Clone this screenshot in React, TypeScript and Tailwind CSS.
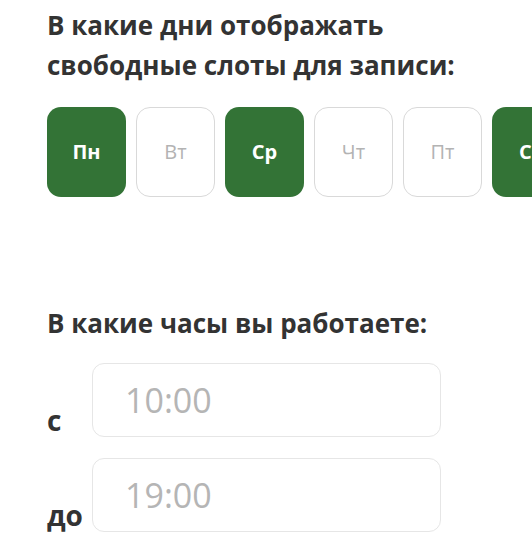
import { useState } from 'react';

const DAYS = ['Пн', 'Вт', 'Ср', 'Чт', 'Пт', 'Сб', 'Вс'];

export default function App() {
  const [selected, setSelected] = useState<string[]>(['Пн', 'Ср', 'Сб']);
  const [from, setFrom] = useState('');
  const [to, setTo] = useState('');

  function toggle(day: string) {
    setSelected((s) => (s.includes(day) ? s.filter((d) => d !== day) : [...s, day]));
  }

  return (
    <div
      className="min-h-[560px] w-full overflow-hidden bg-white pl-[47px] pt-[5px] text-[#333]"
      style={{ fontFamily: '"Open Sans", "Noto Sans", sans-serif' }}
    >
      <h2 className="text-[26px] font-bold leading-[40px]">
        В какие дни отображать
        <br />
        свободные слоты для записи:
      </h2>

      <div className="mt-[22px] flex gap-[10px]">
        {DAYS.map((day) => {
          const on = selected.includes(day);
          return (
            <button
              key={day}
              type="button"
              onClick={() => toggle(day)}
              className={`flex h-[90px] w-[79px] shrink-0 items-center justify-center rounded-[14px] text-[20px] ${
                on
                  ? 'bg-[#337336] font-bold text-white'
                  : 'border border-[#d9d9d9] bg-white text-[#b3b3b3]'
              }`}
            >
              {day}
            </button>
          );
        })}
      </div>

      <h2 className="mt-[106px] text-[26px] font-bold leading-[40px]">В какие часы вы работаете:</h2>

      <div className="mt-[20px] flex flex-col gap-[21px]">
        <div className="flex items-end">
          <span className="w-[45px] shrink-0 pb-[3px] text-[28px] font-bold leading-[28px]">с</span>
          <input
            value={from}
            onChange={(e) => setFrom(e.target.value)}
            placeholder="10:00"
            className="h-[74px] w-[349px] rounded-[12px] border border-[#e6e6e6] bg-white pl-[32px] text-[34px] text-[#333] outline-none placeholder:text-[#b5b5b5]"
          />
        </div>
        <div className="flex items-end">
          <span className="w-[45px] shrink-0 pb-[3px] text-[28px] font-bold leading-[28px]">до</span>
          <input
            value={to}
            onChange={(e) => setTo(e.target.value)}
            placeholder="19:00"
            className="h-[74px] w-[349px] rounded-[12px] border border-[#e6e6e6] bg-white pl-[32px] text-[34px] text-[#333] outline-none placeholder:text-[#b5b5b5]"
          />
        </div>
      </div>
    </div>
  );
}
